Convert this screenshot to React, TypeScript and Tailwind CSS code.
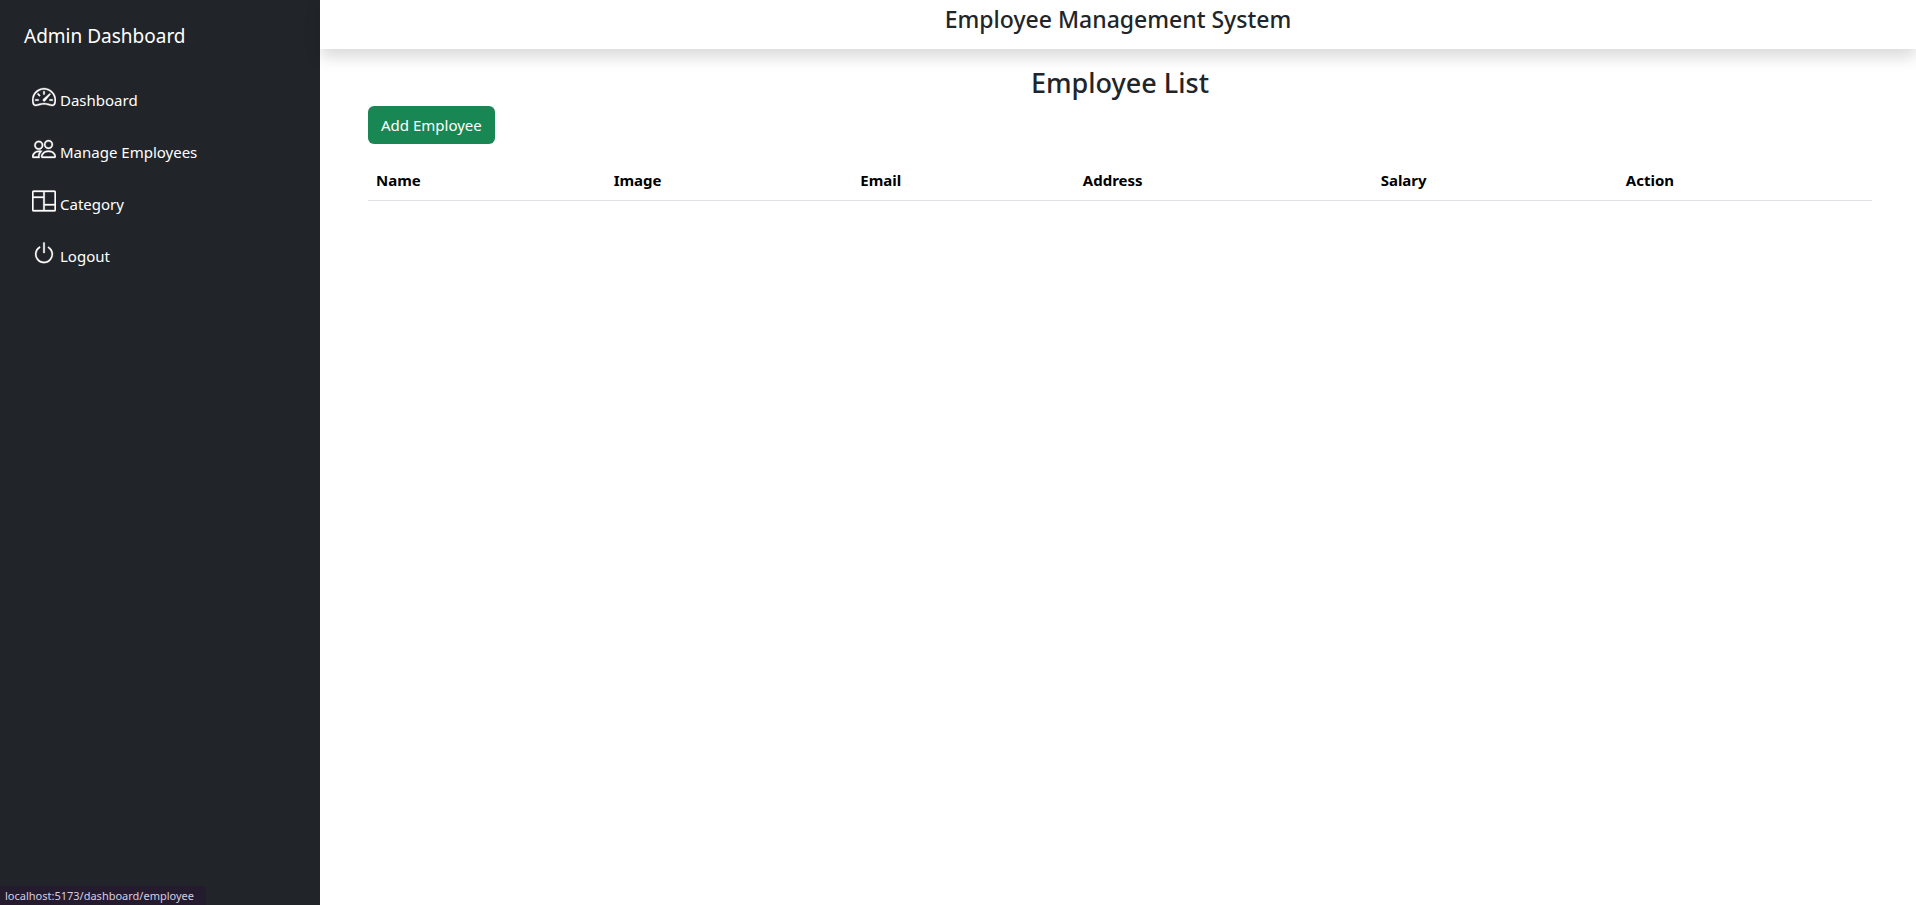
import { BsColumns, BsPeople, BsPower, BsSpeedometer2 } from "react-icons/bs";

const links = [
  { label: "Dashboard", href: "/dashboard", Icon: BsSpeedometer2 },
  { label: "Manage Employees", href: "/dashboard/employee", Icon: BsPeople },
  { label: "Category", href: "/dashboard/category", Icon: BsColumns },
  { label: "Logout", href: "/", Icon: BsPower },
];

const columns = [
  { label: "Name", width: "w-[15.8%]" },
  { label: "Image", width: "w-[16.4%]" },
  { label: "Email", width: "w-[14.8%]" },
  { label: "Address", width: "w-[19.8%]" },
  { label: "Salary", width: "w-[16.3%]" },
  { label: "Action", width: "w-[16.9%]" },
];

function Sidebar() {
  return (
    <aside className="w-80 shrink-0 bg-[#212529] px-6 pt-5 text-white">
      <a href="/dashboard" className="block text-[19px] leading-8">
        Admin Dashboard
      </a>
      <nav className="mt-5">
        <ul>
          {links.map(({ label, href, Icon }) => (
            <li key={label} className="h-[52px]">
              <a href={href} className="flex items-start gap-1 px-2 pt-[13px]">
                <Icon className="size-6 shrink-0 stroke-[0.2]" />
                <span className="pt-[3px] text-[15px] leading-6">{label}</span>
              </a>
            </li>
          ))}
        </ul>
      </nav>
    </aside>
  );
}

export default function App() {
  return (
    <div className="flex min-h-screen bg-white font-['Noto_Sans','Open_Sans',sans-serif] text-[#212529]">
      <Sidebar />
      <main className="min-w-0 grow">
        <header className="flex justify-center p-2 pt-[7px] pb-[17px] shadow-[0_8px_16px_rgba(0,0,0,0.15)]">
          <h4 className="text-[23px] leading-[25px] font-medium">Employee Management System</h4>
        </header>
        <section className="mt-[18px] pr-11 pl-12">
          <h3 className="text-center text-[27px] leading-[31px] font-medium">Employee List</h3>
          <a
            href="/dashboard/add_employee"
            className="mt-2 inline-block rounded-md bg-[#198754] px-[13px] py-[7px] text-[15px] leading-6 text-white"
          >
            Add Employee
          </a>
          <table className="mt-4 w-full table-fixed text-[15px] text-black">
            <thead>
              <tr className="border-b border-[#dee2e6]">
                {columns.map(({ label, width }) => (
                  <th key={label} scope="col" className={`${width} p-2 text-left leading-6 font-bold`}>
                    {label}
                  </th>
                ))}
              </tr>
            </thead>
            <tbody />
          </table>
        </section>
      </main>
      <div className="fixed bottom-0 left-0 rounded-tr bg-[#241b2f] pr-3 pl-[5px] text-[11px] leading-[19px] text-[#d5cde0]">
        localhost:5173/dashboard/employee
      </div>
    </div>
  );
}
